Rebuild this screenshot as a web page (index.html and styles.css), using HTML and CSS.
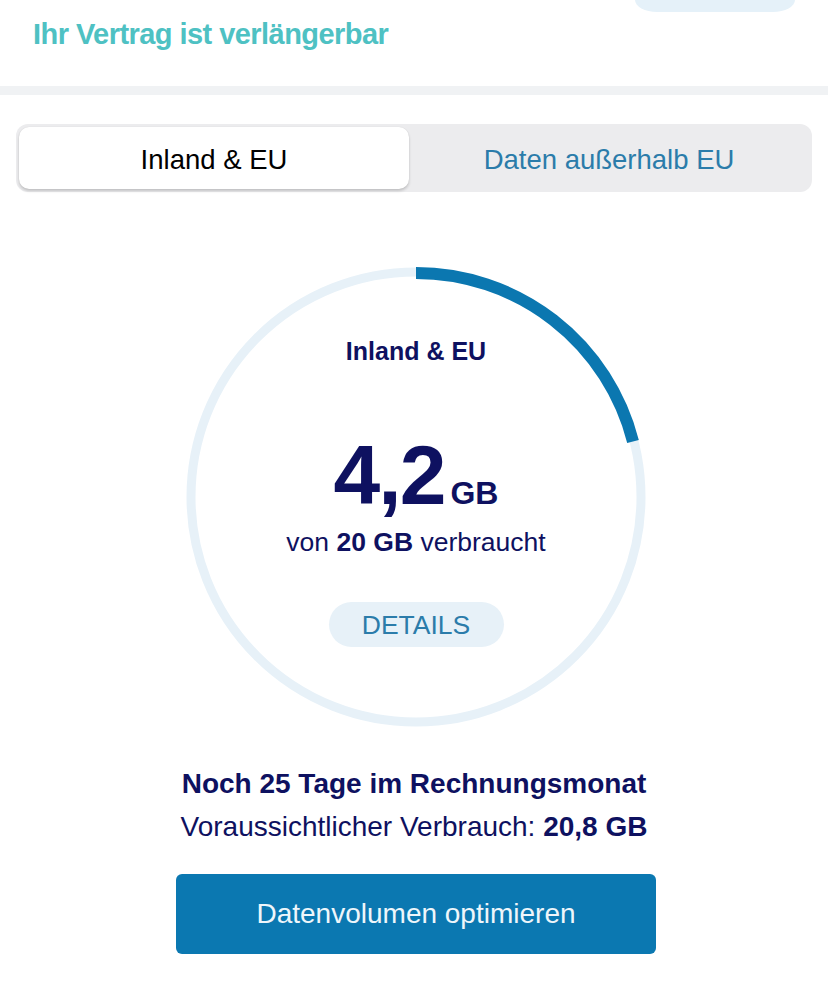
FILE: index.html
```html
<!DOCTYPE html>
<html lang="de">
<head>
<meta charset="utf-8">
<title>Datenvolumen</title>
<link rel="stylesheet" href="styles.css">
</head>
<body>
<header class="top">
  <div class="top-row"><div class="top-pill"></div></div>
  <h1 class="renew">Ihr Vertrag ist verlängerbar</h1>
</header>
<div class="divider"></div>
<main class="content">
  <div class="segmented">
    <div class="seg seg-active">Inland &amp; EU</div>
    <div class="seg">Daten außerhalb EU</div>
  </div>
  <section class="gauge">
    <svg class="ring" width="460" height="460" viewBox="0 0 460 460">
      <circle cx="230" cy="230" r="225" fill="none" stroke="#e7f1f8" stroke-width="9"/>
      <circle cx="230" cy="230" r="224" fill="none" stroke="#0b77b0" stroke-width="12"
        stroke-dasharray="295.5 2000" transform="rotate(-90 230 230)"/>
    </svg>
    <div class="gauge-inner">
      <div class="gauge-label">Inland &amp; EU</div>
      <div class="gauge-value"><span class="num">4,2</span><span class="unit">GB</span></div>
      <div class="gauge-sub">von <b>20 GB</b> verbraucht</div>
      <div class="details">DETAILS</div>
    </div>
  </section>
  <div class="info">
    <div class="info-title">Noch 25 Tage im Rechnungsmonat</div>
    <div class="info-line">Voraussichtlicher Verbrauch: <b>20,8 GB</b></div>
  </div>
  <button class="cta">Datenvolumen optimieren</button>
</main>
</body>
</html>
```
FILE: styles.css
```css
* { box-sizing: border-box; }
html, body { margin: 0; padding: 0; background: #fff; }
body {
  width: 828px;
  font-family: "Liberation Sans", Arial, sans-serif;
  color: #0e1160;
}
.top { height: 86px; padding: 0 33px; }
.top-row { display: flex; justify-content: flex-end; width: 762px; }
.top-pill {
  width: 160px; height: 12px;
  background: #e5f1f9;
  border-radius: 0 0 22px 22px / 0 0 12px 12px;
}
.renew {
  margin: 5px 0 0 0;
  font-family: "Liberation Sans Narrow", "Liberation Sans", Arial, sans-serif;
  font-stretch: condensed;
  font-weight: 700;
  font-size: 29px;
  line-height: 34px;
  letter-spacing: -0.55px;
  color: #4ec1c3;
}
.divider { height: 9px; background: #f0f2f4; }
.content { display: flex; flex-direction: column; align-items: center; padding-top: 29px; }
.segmented {
  width: 796px; height: 68px;
  background: #ececee;
  border-radius: 12px;
  padding: 3px;
  display: flex;
}
.seg {
  flex: 1;
  display: flex; align-items: center; justify-content: center;
  font-size: 27.5px;
  color: #2b7caa;
  padding-top: 4px;
}
.seg-active {
  background: #fff;
  color: #000;
  border-radius: 10px;
  box-shadow: 0 2px 3px rgba(0,0,0,0.18), 0 0 1px rgba(0,0,0,0.12);
  flex: 0 0 390px;
}
.gauge {
  position: relative;
  width: 460px; height: 460px;
  margin-top: 75px;
  margin-left: 4px;
}
.ring { position: absolute; left: 0; top: 0; }
.gauge-inner {
  position: relative;
  display: flex; flex-direction: column; align-items: center;
  padding-top: 68px;
}
.gauge-label { font-size: 25px; font-weight: 700; line-height: 32px; }
.gauge-value { margin-top: 73px; display: flex; align-items: baseline; line-height: 70px; }
.num { font-size: 84px; font-weight: 700; letter-spacing: -2px; }
.unit { font-size: 32px; font-weight: 700; margin-left: 6px; }
.gauge-sub { font-size: 26.5px; line-height: 32px; margin-top: -2px; }
.gauge-sub b { font-weight: 700; }
.details {
  margin-top: 44px;
  width: 175px; height: 45px;
  border-radius: 23px;
  background: #e7f1f8;
  color: #2b7caa;
  font-size: 26.5px;
  padding-top: 2px;
  display: flex; align-items: center; justify-content: center;
}
.info { margin-top: 40px; text-align: center; }
.info-title { font-size: 28px; font-weight: 700; line-height: 34px; }
.info-line { font-size: 28px; line-height: 34px; margin-top: 9px; }
.cta {
  margin-top: 30px;
  width: 480px; height: 80px;
  border: 0; border-radius: 6px;
  background: #0b78b1;
  color: #eef6fb;
  font-family: "Liberation Sans", Arial, sans-serif;
  font-size: 28px;
  margin-left: 4px;
}
```
